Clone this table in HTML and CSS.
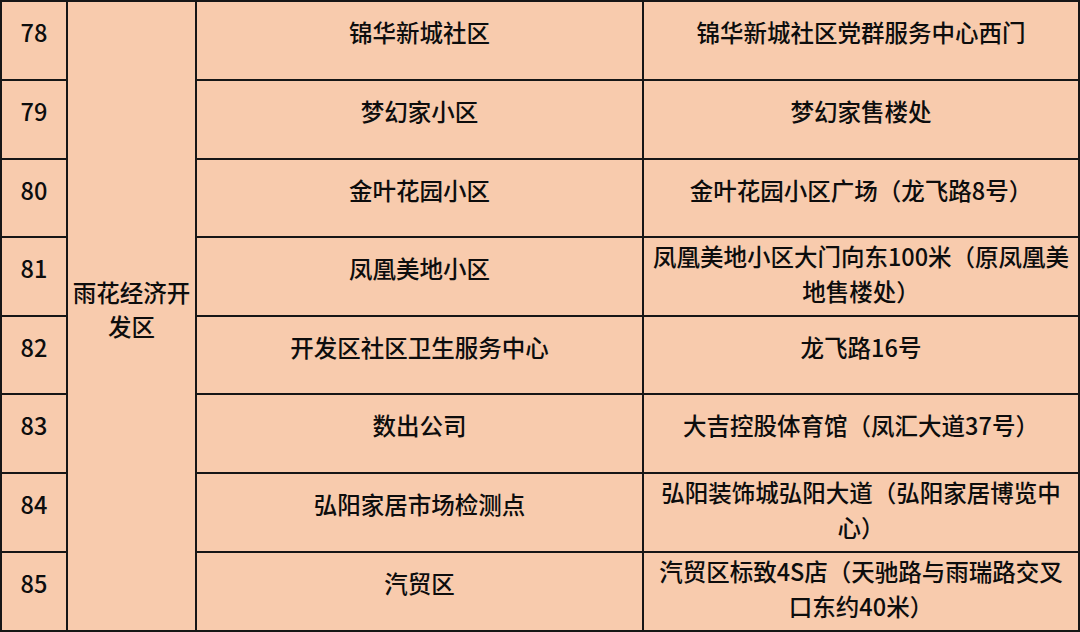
FILE: index.html
```html
<!DOCTYPE html>
<html lang="zh">
<head>
<meta charset="utf-8">
<link rel="stylesheet" href="styles.css">
</head>
<body>
<table class="grid">
  <colgroup>
    <col class="c-num">
    <col class="c-area">
    <col class="c-comm">
    <col class="c-loc">
  </colgroup>
  <tbody>
    <tr class="r79"><td>78</td><td class="area" rowspan="8">雨花经济开发区</td><td>锦华新城社区</td><td>锦华新城社区党群服务中心西门</td></tr>
    <tr class="r79"><td>79</td><td>梦幻家小区</td><td>梦幻家售楼处</td></tr>
    <tr class="r78"><td>80</td><td>金叶花园小区</td><td>金叶花园小区广场（龙飞路8号）</td></tr>
    <tr class="r79"><td>81</td><td>凤凰美地小区</td><td class="wrap">凤凰美地小区大门向东100米（原凤凰美地售楼处）</td></tr>
    <tr class="r78"><td>82</td><td>开发区社区卫生服务中心</td><td>龙飞路16号</td></tr>
    <tr class="r79"><td>83</td><td>数出公司</td><td>大吉控股体育馆（凤汇大道37号）</td></tr>
    <tr class="r79"><td>84</td><td>弘阳家居市场检测点</td><td class="wrap">弘阳装饰城弘阳大道（弘阳家居博览中心）</td></tr>
    <tr class="r79"><td>85</td><td>汽贸区</td><td class="wrap">汽贸区标致4S店（天驰路与雨瑞路交叉口东约40米）</td></tr>
  </tbody>
</table>
</body>
</html>
```
FILE: styles.css
```css
html, body {
  margin: 0;
  padding: 0;
  background: #2a2a2a;
}
.grid {
  border-collapse: collapse;
  table-layout: fixed;
  width: 1078px;
  height: 630px;
  background: #f8cbad;
  font-family: "Noto Sans CJK SC", "Noto Sans", sans-serif;
  font-size: 23.5px;
  font-weight: 500;
  color: #0d0d0d;
}
.c-num { width: 66px; }
.c-area { width: 129px; }
.c-comm { width: 447px; }
.c-loc { width: 436px; }
.r79 { height: 79px; }
.r78 { height: 78px; }
.grid td {
  border: 2px solid #161616;
  padding: 0 8px 16px;
  text-align: center;
  vertical-align: middle;
  line-height: 35px;
  overflow: hidden;
}
.grid td.area {
  line-height: 34px;
  padding: 0 4px 14px;
}
.grid td.wrap {
  padding: 0 8px 6px;
}
```
